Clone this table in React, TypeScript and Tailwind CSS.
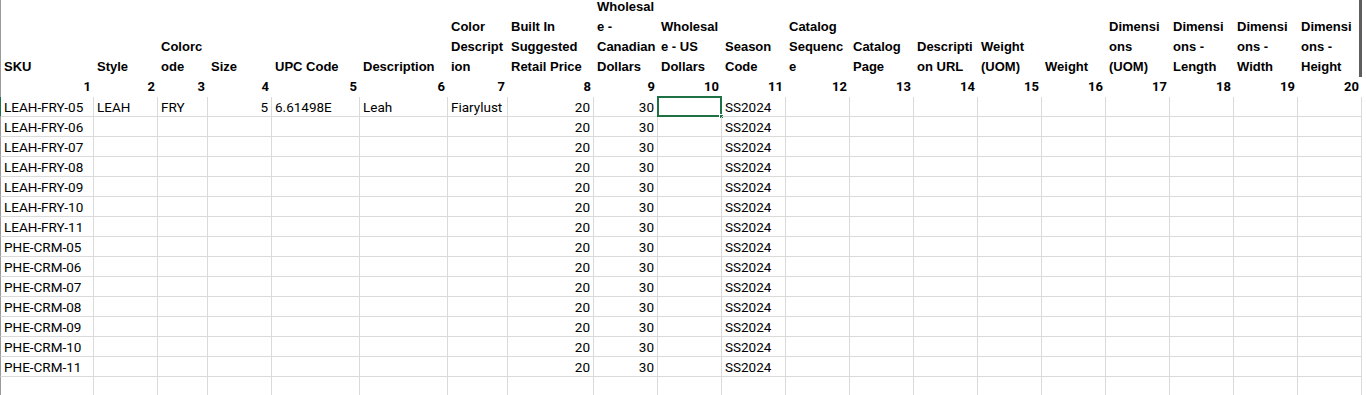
import React from 'react';

interface Column {
  head: string[];
  align: 'left' | 'right';
}

const columns: Column[] = [
  { head: ['SKU'], align: 'left' },
  { head: ['Style'], align: 'left' },
  { head: ['Colorc', 'ode'], align: 'left' },
  { head: ['Size'], align: 'right' },
  { head: ['UPC Code'], align: 'left' },
  { head: ['Description'], align: 'left' },
  { head: ['Color', 'Descript', 'ion'], align: 'left' },
  { head: ['Built In', 'Suggested', 'Retail Price'], align: 'right' },
  { head: ['Wholesal', 'e -', 'Canadian', 'Dollars'], align: 'right' },
  { head: ['Wholesal', 'e - US', 'Dollars'], align: 'right' },
  { head: ['Season', 'Code'], align: 'left' },
  { head: ['Catalog', 'Sequenc', 'e'], align: 'left' },
  { head: ['Catalog', 'Page'], align: 'left' },
  { head: ['Descripti', 'on URL'], align: 'left' },
  { head: ['Weight', '(UOM)'], align: 'left' },
  { head: ['Weight'], align: 'left' },
  { head: ['Dimensi', 'ons', '(UOM)'], align: 'left' },
  { head: ['Dimensi', 'ons -', 'Length'], align: 'left' },
  { head: ['Dimensi', 'ons -', 'Width'], align: 'left' },
  { head: ['Dimensi', 'ons -', 'Height'], align: 'left' },
];

const skus = [
  'LEAH-FRY-05',
  'LEAH-FRY-06',
  'LEAH-FRY-07',
  'LEAH-FRY-08',
  'LEAH-FRY-09',
  'LEAH-FRY-10',
  'LEAH-FRY-11',
  'PHE-CRM-05',
  'PHE-CRM-06',
  'PHE-CRM-07',
  'PHE-CRM-08',
  'PHE-CRM-09',
  'PHE-CRM-10',
  'PHE-CRM-11',
];

// one array per row, 20 cells
const rows: string[][] = skus.map((sku, i) => {
  const cells = Array(20).fill('');
  cells[0] = sku;
  if (i === 0) {
    cells[1] = 'LEAH';
    cells[2] = 'FRY';
    cells[3] = '5';
    cells[4] = '6.61498E';
    cells[5] = 'Leah';
    cells[6] = 'Fiarylust';
  }
  cells[7] = '20';
  cells[8] = '30';
  cells[10] = 'SS2024';
  return cells;
});
rows.push(Array(20).fill(''));

export default function App() {
  return (
    <div className="w-[1366px] h-[395px] overflow-hidden bg-white text-black">
      <div className="grid grid-cols-[94px_64px_50px_64px_88px_88px_60px_86px_64px_64px_64px_64px_64px_64px_64px_64px_64px_64px_64px_64px] w-[1365px]">
        {/* header row */}
        {columns.map((col, c) => (
          <div
            key={`h${c}`}
            className={`h-[77px] flex flex-col justify-end pl-[3px] text-[13px] leading-[20px] font-bold whitespace-nowrap font-['Liberation_Sans',Arial,sans-serif] ${
              c === 0 ? 'border-l border-[#9a9a9a]' : ''
            } ${c === 19 ? 'border-r-[3px] border-r-[#5e5e5e]' : ''}`}
          >
            {col.head.map((line, k) => (
              <span key={k}>{line}</span>
            ))}
          </div>
        ))}

        {/* column number row */}
        {columns.map((_, c) => (
          <div
            key={`n${c}`}
            className={`h-[20px] pr-[3px] text-right text-[13px] leading-[20px] font-bold font-['Roboto',sans-serif] ${
              c === 0 ? 'border-l border-[#9a9a9a]' : ''
            }`}
          >
            {c + 1}
          </div>
        ))}

        {/* data rows */}
        {rows.map((cells, r) =>
          cells.map((val, c) => {
            const selected = r === 0 && c === 9;
            const right = columns[c].align === 'right';
            return (
              <div
                key={`${r}-${c}`}
                className={`relative h-[20px] border-r border-b border-[#dadada] text-[13.5px] leading-[21px] whitespace-nowrap font-['Roboto',sans-serif] ${
                  right ? 'text-right pr-[3px]' : 'text-left pl-[3px]'
                } ${c === 0 ? (r === 0 ? 'border-l border-l-[#1e7145]' : 'border-l border-l-[#9a9a9a]') : ''}`}
              >
                {val}
                {selected && (
                  <>
                    <div className="absolute -left-px -top-px -right-px -bottom-px border-2 border-[#1e7145]" />
                    <div className="absolute -right-[3px] -bottom-[3px] w-[5px] h-[5px] bg-[#1e7145] border border-white" />
                  </>
                )}
              </div>
            );
          })
        )}
      </div>
    </div>
  );
}
